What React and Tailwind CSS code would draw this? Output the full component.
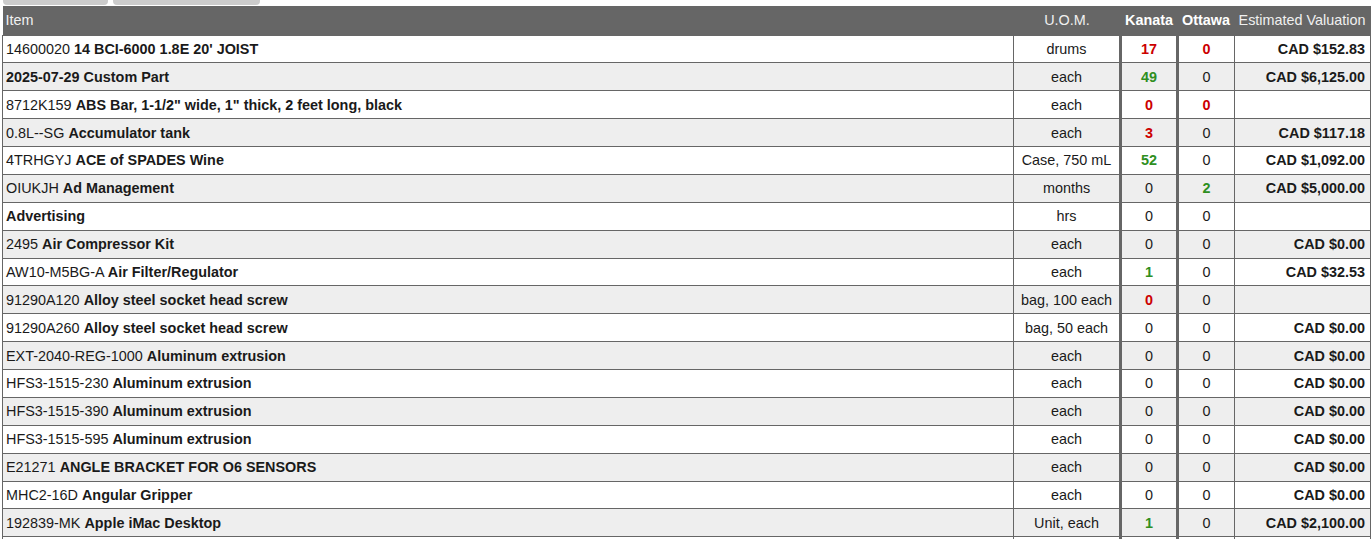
import React from "react";

const RED = "text-[#cc0000] font-bold";
const GREEN = "text-[#2f8f1f] font-bold";

const rows = [
  { code: "14600020", name: "14 BCI-6000 1.8E 20' JOIST", uom: "drums", k: ["17", RED], o: ["0", RED], val: "CAD $152.83" },
  { code: "", name: "2025-07-29 Custom Part", uom: "each", k: ["49", GREEN], o: ["0"], val: "CAD $6,125.00" },
  { code: "8712K159", name: 'ABS Bar, 1-1/2" wide, 1" thick, 2 feet long, black', uom: "each", k: ["0", RED], o: ["0", RED], val: "" },
  { code: "0.8L--SG", name: "Accumulator tank", uom: "each", k: ["3", RED], o: ["0"], val: "CAD $117.18" },
  { code: "4TRHGYJ", name: "ACE of SPADES Wine", uom: "Case, 750 mL", k: ["52", GREEN], o: ["0"], val: "CAD $1,092.00" },
  { code: "OIUKJH", name: "Ad Management", uom: "months", k: ["0"], o: ["2", GREEN], val: "CAD $5,000.00" },
  { code: "", name: "Advertising", uom: "hrs", k: ["0"], o: ["0"], val: "" },
  { code: "2495", name: "Air Compressor Kit", uom: "each", k: ["0"], o: ["0"], val: "CAD $0.00" },
  { code: "AW10-M5BG-A", name: "Air Filter/Regulator", uom: "each", k: ["1", GREEN], o: ["0"], val: "CAD $32.53" },
  { code: "91290A120", name: "Alloy steel socket head screw", uom: "bag, 100 each", k: ["0", RED], o: ["0"], val: "" },
  { code: "91290A260", name: "Alloy steel socket head screw", uom: "bag, 50 each", k: ["0"], o: ["0"], val: "CAD $0.00" },
  { code: "EXT-2040-REG-1000", name: "Aluminum extrusion", uom: "each", k: ["0"], o: ["0"], val: "CAD $0.00" },
  { code: "HFS3-1515-230", name: "Aluminum extrusion", uom: "each", k: ["0"], o: ["0"], val: "CAD $0.00" },
  { code: "HFS3-1515-390", name: "Aluminum extrusion", uom: "each", k: ["0"], o: ["0"], val: "CAD $0.00" },
  { code: "HFS3-1515-595", name: "Aluminum extrusion", uom: "each", k: ["0"], o: ["0"], val: "CAD $0.00" },
  { code: "E21271", name: "ANGLE BRACKET FOR O6 SENSORS", uom: "each", k: ["0"], o: ["0"], val: "CAD $0.00" },
  { code: "MHC2-16D", name: "Angular Gripper", uom: "each", k: ["0"], o: ["0"], val: "CAD $0.00" },
  { code: "192839-MK", name: "Apple iMac Desktop", uom: "Unit, each", k: ["1", GREEN], o: ["0"], val: "CAD $2,100.00" },
  { code: "", name: "", uom: "", k: [""], o: [""], val: "" },
];

function App() {
  return (
    <div className="font-['Liberation_Sans',Arial,sans-serif] text-[14.4px] text-[#1a1a1a] bg-white h-[539px] overflow-hidden">
      <div className="flex gap-[5px] pl-[3px] h-[6px]">
        <div className="w-[105px] h-[5px] bg-[#cccccc] rounded-b-[4px]" />
        <div className="w-[147px] h-[5px] bg-[#cccccc] rounded-b-[4px]" />
      </div>
      <table className="ml-[2px] w-[1368px] table-fixed border-collapse">
        <colgroup>
          <col className="w-[1011px]" />
          <col className="w-[107px]" />
          <col className="w-[57px]" />
          <col className="w-[57px]" />
          <col className="w-[136px]" />
        </colgroup>
        <thead>
          <tr className="bg-[#666666] text-[#f0f0f0] h-[29px]">
            <th className="text-left font-normal px-[3px] pt-[2px]">Item</th>
            <th className="font-normal pt-[2px]">U.O.M.</th>
            <th className="font-bold text-white pt-[2px]">Kanata</th>
            <th className="font-bold text-white pt-[2px]">Ottawa</th>
            <th className="font-normal text-right pr-[5px] pt-[2px] whitespace-nowrap">Estimated Valuation</th>
          </tr>
        </thead>
        <tbody>
          {rows.map((r, i) => (
            <tr key={i} className={i % 2 ? "bg-[#eeeeee]" : "bg-white"}>
              <td className="border border-[#666] h-[27.88px] pt-[1px] pb-0 px-[3px] leading-[15px] whitespace-nowrap">
                {r.code && <span>{r.code} </span>}
                <b>{r.name}</b>
              </td>
              <td className="border border-[#666] text-center pt-[1px] pb-0 leading-[15px] whitespace-nowrap">{r.uom}</td>
              <td className={"border border-[#666] border-l-[3px] border-r-[3px] text-center pt-[1px] pb-0 leading-[15px] " + (r.k[1] || "")}>{r.k[0]}</td>
              <td className={"border border-[#666] border-l-[3px] text-center pt-[1px] pb-0 leading-[15px] " + (r.o[1] || "")}>{r.o[0]}</td>
              <td className="border border-[#666] text-right pr-[5px] pt-[1px] pb-0 leading-[15px] font-bold whitespace-nowrap">{r.val}</td>
            </tr>
          ))}
        </tbody>
      </table>
    </div>
  );
}

export default App;
